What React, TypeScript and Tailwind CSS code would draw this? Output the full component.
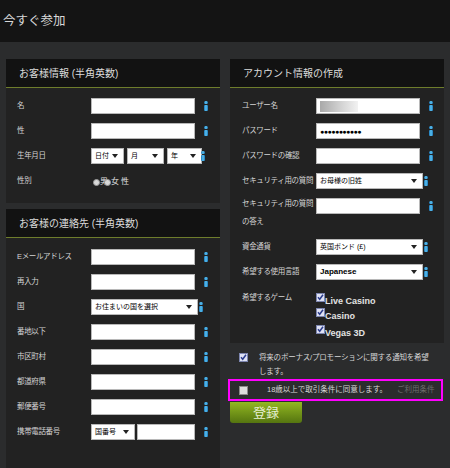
import React from "react";

const font = "font-['Liberation_Sans','Noto_Sans_CJK_JP',sans-serif]";

function Info({ className = "" }: { className?: string }) {
  return (
    <span className={`flex flex-col items-center w-[4px] gap-[1px] shrink-0 ${className}`}>
      <span className="w-[4px] h-[3px] rounded-full bg-gradient-to-r from-[#1877b8] via-[#5cc3f2] to-[#1877b8]" />
      <span className="w-[4px] h-[6px] rounded-[1px] bg-gradient-to-r from-[#1877b8] via-[#5cc3f2] to-[#1877b8]" />
    </span>
  );
}

function Input({ w = "w-[104px]", children }: { w?: string; children?: React.ReactNode }) {
  return (
    <div className={`${w} h-[16px] bg-white border border-[#b8b8b8] flex items-center px-[3px] shrink-0`}>
      {children}
    </div>
  );
}

function Select({ w, text, bold = false }: { w: string; text: string; bold?: boolean }) {
  return (
    <div className={`${w} h-[16px] bg-white border border-[#b8b8b8] flex items-center justify-between pl-[3px] pr-[5px] shrink-0`}>
      <span className={`text-black whitespace-nowrap ${bold ? "font-bold text-[8px]" : "text-[7px]"}`}>{text}</span>
      <span className="w-0 h-0 border-l-[3px] border-r-[3px] border-t-[4px] border-l-transparent border-r-transparent border-t-[#222]" />
    </div>
  );
}

function Check({ checked = true }: { checked?: boolean }) {
  return checked ? (
    <svg width="9" height="9" viewBox="0 0 9 9" className="shrink-0">
      <rect x="0.5" y="0.5" width="8" height="8" fill="#dfe2f4" stroke="#7d86b0" />
      <path d="M2 4.3 L3.7 6.3 L7 1.8" fill="none" stroke="#2b3c8c" strokeWidth="1.5" />
    </svg>
  ) : (
    <span className="w-[9px] h-[9px] bg-[#dcdcdc] border border-[#8a8a8a] shrink-0" />
  );
}

const labelCls = "w-[74px] text-[7.5px] tracking-[-0.35px] text-[#d4d4d4] whitespace-nowrap shrink-0";

function Row({ label, children, cls = "mb-[9px]" }: { label: React.ReactNode; children: React.ReactNode; cls?: string }) {
  return (
    <div className={`flex items-center h-[16px] ${cls}`}>
      <span className={labelCls}>{label}</span>
      {children}
    </div>
  );
}

function TextRow({ label, children }: { label: string; children?: React.ReactNode }) {
  return (
    <Row label={label}>
      <Input>{children}</Input>
      <Info className="ml-[9px]" />
    </Row>
  );
}

function Panel({ title, children, body }: { title: string; children: React.ReactNode; body: string }) {
  return (
    <div className="bg-[#222222]">
      <div className="h-[29px] bg-[#121212] border-b border-[#6e7d2c] flex items-center pl-[13px]">
        <span className="text-[10px] text-[#dcdcdc]">{title}</span>
      </div>
      <div className={body}>{children}</div>
    </div>
  );
}

export default function App() {
  return (
    <div className={`w-[450px] h-[468px] bg-[#2b2c2d] overflow-hidden ${font}`}>
      <div className="h-[42px] bg-[#141414] flex items-center pl-[3px]">
        <span className="text-[12.5px] text-[#d8d8d8]">今すぐ参加</span>
      </div>

      <div className="flex gap-[10px] pl-[6px] pt-[17px]">
        <div className="w-[214px] flex flex-col gap-[6px]">
          <Panel title="お客様情報 (半角英数)" body="pl-[11px] pt-[10px] pb-[5px]">
            <TextRow label="名" />
            <TextRow label="性" />
            <Row label="生年月日">
              <div className="flex items-center gap-[3px]">
                <Select w="w-[33px]" text="日付" />
                <Select w="w-[37px]" text="月" />
                <Select w="w-[35px]" text="年" />
              </div>
              <Info className="-ml-[1px]" />
            </Row>
            <Row label="性別">
              <div className="flex items-center text-[8px] text-[#e0e0e0] mt-[2px] ml-[2px]">
                <span className="w-[7px] h-[7px] rounded-full bg-[#d8d8d8] border border-[#999]" />
                <span>男</span>
                <span className="w-[7px] h-[7px] rounded-full bg-[#d8d8d8] border border-[#999] -ml-[4px]" />
                <span>女</span>
                <span className="ml-[2px]">性</span>
              </div>
            </Row>
          </Panel>

          <Panel title="お客様の連絡先 (半角英数)" body="pl-[11px] pt-[11px] pb-[26px]">
            <TextRow label="Eメールアドレス" />
            <TextRow label="再入力" />
            <Row label="国">
              <Select w="w-[107px]" text="お住まいの国を選択" />
              <Info className="ml-[1px]" />
            </Row>
            <TextRow label="番地以下" />
            <TextRow label="市区町村" />
            <TextRow label="都道府県" />
            <TextRow label="郵便番号" />
            <Row label="携帯電話番号">
              <div className="flex items-center gap-[2px]">
                <Select w="w-[44px]" text="国番号" />
                <Input w="w-[58px]" />
              </div>
              <Info className="ml-[9px]" />
            </Row>
          </Panel>
        </div>

        <div className="w-[214px] flex flex-col">
          <Panel title="アカウント情報の作成" body="pl-[12px] pt-[10px] pb-[2px]">
            <TextRow label="ユーザー名">
              <span className="w-[38px] h-[11px] bg-gradient-to-r from-[#a9a9a9] via-[#cfcfcf] to-[#f2f2f2]" />
            </TextRow>
            <TextRow label="パスワード">
              <span className="text-[7px] tracking-[-0.5px] text-black leading-none">●●●●●●●●●●●</span>
            </TextRow>
            <TextRow label="パスワードの確認" />
            <Row label="セキュリティ用の質問">
              <Select w="w-[107px]" text="お母様の旧姓" />
              <Info className="ml-[1px]" />
            </Row>
            <div className="flex items-start h-[36px] mb-[8px] -mt-[3px]">
              <span className={`${labelCls} leading-[18px]`}>
                セキュリティ用の質問
                <br />
                の答え
              </span>
              <div className="flex items-center mt-[3px]">
                <Input />
                <Info className="ml-[9px]" />
              </div>
            </div>
            <Row label="資金通貨">
              <Select w="w-[107px]" text="英国ポンド (£)" />
              <Info className="ml-[1px]" />
            </Row>
            <Row label="希望する使用言語">
              <Select w="w-[107px]" text="Japanese" bold />
              <Info className="ml-[1px]" />
            </Row>
            <div className="flex items-start">
              <span className={`${labelCls} mt-[3px]`}>希望するゲーム</span>
              <div className="flex flex-col text-[9px] font-bold text-[#e2e2e2]">
                <div className="flex items-start h-[16px] pt-[4px]">
                  <Check />
                  <span className="leading-[10px] mt-[3px]">Live Casino</span>
                </div>
                <div className="flex items-start h-[17px] pt-[3px]">
                  <Check />
                  <span className="leading-[10px] mt-[3px]">Casino</span>
                </div>
                <div className="flex items-start h-[19px] pt-[3px]">
                  <Check />
                  <span className="leading-[10px] mt-[3px]">Vegas 3D</span>
                </div>
              </div>
            </div>
          </Panel>

          <div className="flex items-start mt-[10px] pl-[9px] pr-[8px]">
            <Check />
            <span className="ml-[11px] text-[7.5px] tracking-[-0.2px] leading-[14px] text-[#d8d8d8] -mt-[2px]">
              将来のボーナス/プロモーションに関する通知を希望
              <br />
              します。
            </span>
          </div>
          <div className="-ml-[2px] w-[215px] h-[22px] border-2 border-[#ff00ff] flex items-center pl-[9px]">
            <Check checked={false} />
            <span className="ml-[19px] text-[7.5px] text-[#d8d8d8] whitespace-nowrap">18歳以上で取引条件に同意します。</span>
            <span className="ml-[10px] text-[7.5px] text-[#6e6e6e] whitespace-nowrap">ご利用条件</span>
          </div>
          <button className="w-[72px] h-[21px] mt-[1px] rounded-b-[3px] bg-gradient-to-b from-[#93b822] to-[#557510] text-[13px] text-[#e6efd2] flex items-center justify-center">
            登録
          </button>
        </div>
      </div>
    </div>
  );
}
